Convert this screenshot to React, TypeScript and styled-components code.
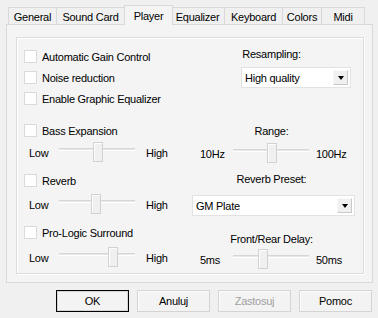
import React from "react";
import styled, { createGlobalStyle } from "styled-components";

const GlobalStyle = createGlobalStyle`
  html, body {
    margin: 0;
    padding: 0;
    background: #f0f0f0;
  }
  body {
    font-family: "Liberation Sans", Arial, sans-serif;
    font-size: 11px;
    letter-spacing: -0.25px;
    color: #000;
  }
  * {
    box-sizing: border-box;
  }
`;

const Window = styled.div`
  width: 378px;
  height: 318px;
  padding: 5px 0 0 6px;
  background: #f0f0f0;
`;

const TabStrip = styled.div`
  display: flex;
  align-items: flex-end;
  height: 19px;
  padding-left: 2px;
  position: relative;
  z-index: 1;
`;

const Tab = styled.div<{ $active?: boolean; $w: number }>`
  width: ${(p) => p.$w}px;
  height: ${(p) => (p.$active ? 20 : 17)}px;
  margin-bottom: ${(p) => (p.$active ? -1 : 0)}px;
  display: flex;
  align-items: center;
  justify-content: center;
  padding-top: ${(p) => (p.$active ? 0 : 1)}px;
  background: ${(p) => (p.$active ? "#f4f4f4" : "#f0f0f0")};
  border: 1px solid #d9d9d9;
  border-bottom: none;
  white-space: nowrap;
  & + & {
    margin-left: ${(p) => (p.$active ? -3 : -1)}px;
  }
  ${(p) => (p.$active ? "margin-right: -2px; position: relative; z-index: 2;" : "")}
`;

const Panel = styled.div`
  width: 367px;
  height: 259px;
  border: 1px solid #d9d9d9;
  background: #f4f4f4;
  padding: 12px 0 0 9px;
`;

const GroupBox = styled.div`
  width: 348px;
  height: 237px;
  border: 1px solid #dcdcdc;
  box-shadow: 1px 1px 0 #fff, inset 1px 1px 0 #fff;
  display: flex;
  padding: 8px 0 0 7px;
`;

const LeftCol = styled.div`
  width: 168px;
  display: flex;
  flex-direction: column;
`;

const RightCol = styled.div`
  width: 163px;
  display: flex;
  flex-direction: column;
`;

const CheckRow = styled.label<{ $mt?: number }>`
  height: 21px;
  margin-top: ${(p) => p.$mt ?? 0}px;
  display: flex;
  align-items: center;
  gap: 5px;
  white-space: nowrap;
`;

const Box = styled.span`
  width: 13px;
  height: 13px;
  background: #fff;
  border: 1px solid #dadada;
  flex: none;
`;

const SliderRow = styled.div<{ $mt?: number; $pad: number; $labelW: number }>`
  height: 20px;
  margin-top: ${(p) => p.$mt ?? 0}px;
  padding-left: ${(p) => p.$pad}px;
  display: grid;
  grid-template-columns: ${(p) => p.$labelW}px 76px auto;
  align-items: center;
  white-space: nowrap;
`;

const SideLabel = styled.span<{ $ml?: number }>`
  padding-top: 1px;
  margin-left: ${(p) => p.$ml ?? 0}px;
`;

const Track = styled.div`
  position: relative;
  height: 20px;
`;

const Channel = styled.div`
  position: absolute;
  left: 0;
  right: 0;
  top: 6px;
  height: 3px;
  background: #e7e7e7;
  border-top: 1px solid #d6d6d6;
  border-bottom: 1px solid #fff;
`;

const Thumb = styled.div`
  position: absolute;
  top: 0;
  width: 10px;
  height: 20px;
  background: #f0f0f0;
  border: 1px solid #d2d2d2;
  box-shadow: inset 1px 1px 0 #fdfdfd;
`;

const Caption = styled.div<{ $mt?: number }>`
  height: 20px;
  margin-top: ${(p) => p.$mt ?? 0}px;
  display: flex;
  align-items: center;
  justify-content: center;
  padding-right: 4px;
`;

const Combo = styled.div<{ $mt?: number; $ml?: number; $w: number }>`
  width: ${(p) => p.$w}px;
  height: 21px;
  margin-top: ${(p) => p.$mt ?? 0}px;
  margin-left: ${(p) => p.$ml ?? 0}px;
  background: #fff;
  border: 1px solid #e2e2e2;
  display: flex;
  align-items: center;
  justify-content: space-between;
  padding: 0 2px 0 3px;
`;

const ComboButton = styled.span`
  width: 15px;
  height: 15px;
  background: #f0f0f0;
  border: 1px solid #c8c8c8;
  border-top-color: #f8f8f8;
  border-left-color: #f8f8f8;
  display: flex;
  align-items: center;
  justify-content: center;
`;

const Arrow = styled.span`
  width: 0;
  height: 0;
  border-left: 3.5px solid transparent;
  border-right: 3.5px solid transparent;
  border-top: 4px solid #000;
`;

const ButtonRow = styled.div`
  display: flex;
  justify-content: flex-end;
  gap: 8px;
  margin-top: 7px;
  padding-right: 6px;
`;

const Button = styled.button<{ $default?: boolean }>`
  width: 73px;
  height: 22px;
  font: inherit;
  letter-spacing: inherit;
  color: ${(p) => (p.disabled ? "#a0a0a0" : "#000")};
  background: #f3f3f3;
  border: 1px solid ${(p) => (p.$default ? "#000" : "#d4d4d4")};
  box-shadow: ${(p) => (p.$default ? "inset 0 0 0 1px #d4d4d4" : "inset 1px 1px 0 #fcfcfc")};
  padding: 0;
`;

function Check({ label, mt }: { label: string; mt?: number }) {
  return (
    <CheckRow $mt={mt}>
      <Box />
      <span>{label}</span>
    </CheckRow>
  );
}

function Slider({
  low,
  high,
  pos,
  mt,
  pad,
  labelW,
  gap,
}: {
  low: string;
  high: string;
  pos: number;
  mt?: number;
  pad: number;
  labelW: number;
  gap: number;
}) {
  return (
    <SliderRow $mt={mt} $pad={pad} $labelW={labelW}>
      <SideLabel>{low}</SideLabel>
      <Track>
        <Channel />
        <Thumb style={{ left: pos }} />
      </Track>
      <SideLabel $ml={gap}>{high}</SideLabel>
    </SliderRow>
  );
}

function Dropdown({ value, w, mt, ml }: { value: string; w: number; mt?: number; ml?: number }) {
  return (
    <Combo $w={w} $mt={mt} $ml={ml}>
      <span>{value}</span>
      <ComboButton>
        <Arrow />
      </ComboButton>
    </Combo>
  );
}

const tabs = [
  { name: "General", w: 49 },
  { name: "Sound Card", w: 69 },
  { name: "Player", w: 49, active: true },
  { name: "Equalizer", w: 55 },
  { name: "Keyboard", w: 59 },
  { name: "Colors", w: 40 },
  { name: "Midi", w: 44 },
];

export default function App() {
  return (
    <>
      <GlobalStyle />
      <Window>
        <TabStrip>
          {tabs.map((t) => (
            <Tab key={t.name} $w={t.w} $active={t.active}>
              {t.name}
            </Tab>
          ))}
        </TabStrip>
        <Panel>
          <GroupBox>
            <LeftCol>
              <Check label="Automatic Gain Control" />
              <Check label="Noise reduction" />
              <Check label="Enable Graphic Equalizer" />
              <Check label="Bass Expansion" mt={11} />
              <Slider low="Low" high="High" pos={34} mt={1} pad={5} labelW={30} gap={11} />
              <Check label="Reverb" mt={8} />
              <Slider low="Low" high="High" pos={32} mt={3} pad={5} labelW={30} gap={11} />
              <Check label="Pro-Logic Surround" mt={8} />
              <Slider low="Low" high="High" pos={49} mt={4} pad={5} labelW={30} gap={11} />
            </LeftCol>
            <RightCol>
              <Caption $mt={-2}>Resampling:</Caption>
              <Dropdown value="High quality" w={110} mt={3} ml={49} />
              <Caption $mt={33}>Range:</Caption>
              <Slider low="10Hz" high="100Hz" pos={34} mt={2} pad={8} labelW={33} gap={7} />
              <Caption $mt={6}>Reverb Preset:</Caption>
              <Dropdown value="GM Plate" w={163} mt={6} />
              <Caption $mt={13}>Front/Rear Delay:</Caption>
              <Slider low="5ms" high="50ms" pos={25} pad={8} labelW={33} gap={7} />
            </RightCol>
          </GroupBox>
        </Panel>
        <ButtonRow>
          <Button $default>OK</Button>
          <Button>Anuluj</Button>
          <Button disabled>Zastosuj</Button>
          <Button>Pomoc</Button>
        </ButtonRow>
      </Window>
    </>
  );
}
